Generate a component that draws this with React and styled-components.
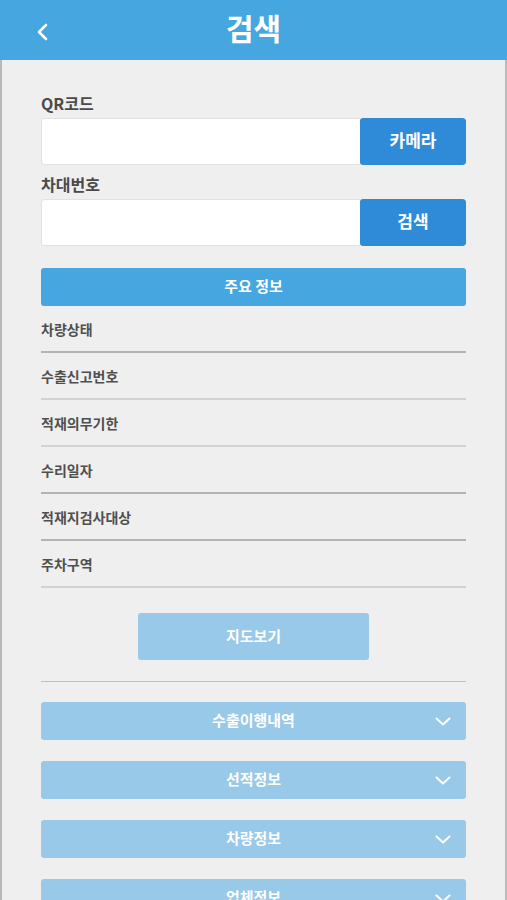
import React from 'react';
import styled, { createGlobalStyle } from 'styled-components';

const GlobalStyle = createGlobalStyle`
  html, body {
    margin: 0;
    padding: 0;
    background: #efefef;
  }
  body {
    font-family: "Noto Sans CJK KR", "Noto Sans", sans-serif;
  }
`;

const Page = styled.div`
  width: 507px;
  height: 900px;
  overflow: hidden;
  display: flex;
  flex-direction: column;
`;

const Header = styled.header`
  height: 60px;
  flex-shrink: 0;
  background: #45a6e0;
  display: flex;
  align-items: center;
  justify-content: center;
  position: relative;
`;

const BackButton = styled.button`
  position: absolute;
  left: 32px;
  top: 21px;
  width: 20px;
  height: 22px;
  padding: 0;
  border: none;
  background: none;
  display: flex;
  align-items: center;
  justify-content: center;
`;

const Title = styled.h1`
  margin: 0;
  color: #fff;
  font-size: 30px;
  font-weight: 700;
  line-height: 1;
  margin-top: -6px;
`;

const Body = styled.main`
  flex: 1;
  background: #efefef;
  border-left: 2px solid #b9b9b9;
  border-right: 2px solid #b9b9b9;
  padding: 33px 39px 0 39px;
  display: flex;
  flex-direction: column;
`;

const Label = styled.div`
  color: #4a4a4a;
  font-size: 16px;
  font-weight: 700;
  line-height: 20px;
  margin-bottom: 5px;
  margin-top: ${(p) => p.$top || 0}px;
`;

const InputRow = styled.div`
  display: flex;
  height: 47px;
  border-radius: 3px;
  overflow: hidden;
`;

const TextInput = styled.input`
  flex: 1;
  border: 1px solid #e2e2e2;
  border-right: none;
  border-radius: 3px 0 0 3px;
  background: #fff;
  outline: none;
  padding: 0 10px;
  font-size: 15px;
`;

const SideButton = styled.button`
  width: 106px;
  border: none;
  border-radius: 3px;
  background: #2f8bd7;
  color: #fff;
  font-family: inherit;
  font-size: 17px;
  font-weight: 700;
  padding: 0;
  padding-bottom: 4px;
`;

const SectionBar = styled.div`
  margin-top: 22px;
  height: 38px;
  border-radius: 3px;
  background: #45a6e0;
  color: #fff;
  font-size: 15px;
  font-weight: 700;
  display: flex;
  align-items: center;
  justify-content: center;
  padding-bottom: 3px;
  box-sizing: border-box;
`;

const InfoList = styled.div`
  display: flex;
  flex-direction: column;
`;

const InfoRow = styled.div`
  height: 47px;
  border-bottom: 2px solid ${(p) => (p.$dark ? '#b3b3b3' : '#d2d2d2')};
  color: #4f4f4f;
  font-size: 14px;
  font-weight: 700;
  display: flex;
  align-items: flex-start;
  padding-top: 13px;
  box-sizing: border-box;
`;

const MapButton = styled.button`
  align-self: center;
  margin-top: 25px;
  width: 231px;
  height: 47px;
  border: none;
  border-radius: 3px;
  background: #99c9e8;
  color: #fff;
  font-family: inherit;
  font-size: 15px;
  font-weight: 700;
  padding-bottom: 4px;
`;

const Divider = styled.div`
  margin-top: 21px;
  height: 1px;
  background: #a3cde6;
`;

const Accordion = styled.div`
  display: flex;
  flex-direction: column;
  gap: 21px;
  margin-top: 20px;
`;

const AccordionBar = styled.div`
  height: 38px;
  border-radius: 3px;
  background: #99c9e8;
  color: #fff;
  font-size: 15px;
  font-weight: 700;
  display: flex;
  align-items: center;
  justify-content: center;
  position: relative;
  padding-bottom: 3px;
  box-sizing: border-box;
  flex-shrink: 0;
`;

const Chevron = styled.svg`
  position: absolute;
  right: 15px;
  top: 15px;
`;

const infoItems = [
  { label: '차량상태', dark: true },
  { label: '수출신고번호', dark: false },
  { label: '적재의무기한', dark: false },
  { label: '수리일자', dark: true },
  { label: '적재지검사대상', dark: true },
  { label: '주차구역', dark: false },
];

const sections = ['수출이행내역', '선적정보', '차량정보', '업체정보'];

export default function App() {
  return (
    <Page>
      <GlobalStyle />
      <Header>
        <BackButton aria-label="back">
          <svg width="14" height="18" viewBox="0 0 14 18">
            <path d="M11 2 L4 9 L11 16" fill="none" stroke="#fff" strokeWidth="2.6" strokeLinecap="round" strokeLinejoin="round" />
          </svg>
        </BackButton>
        <Title>검색</Title>
      </Header>
      <Body>
        <Label>QR코드</Label>
        <InputRow>
          <TextInput />
          <SideButton>카메라</SideButton>
        </InputRow>
        <Label $top={9}>차대번호</Label>
        <InputRow>
          <TextInput />
          <SideButton>검색</SideButton>
        </InputRow>
        <SectionBar>주요 정보</SectionBar>
        <InfoList>
          {infoItems.map((item) => (
            <InfoRow key={item.label} $dark={item.dark}>
              {item.label}
            </InfoRow>
          ))}
        </InfoList>
        <MapButton>지도보기</MapButton>
        <Divider />
        <Accordion>
          {sections.map((s) => (
            <AccordionBar key={s}>
              {s}
              <Chevron width="16" height="9" viewBox="0 0 16 9">
                <path d="M1.5 1.5 L8 7.5 L14.5 1.5" fill="none" stroke="#fff" strokeWidth="2" strokeLinecap="round" strokeLinejoin="round" />
              </Chevron>
            </AccordionBar>
          ))}
        </Accordion>
      </Body>
    </Page>
  );
}
